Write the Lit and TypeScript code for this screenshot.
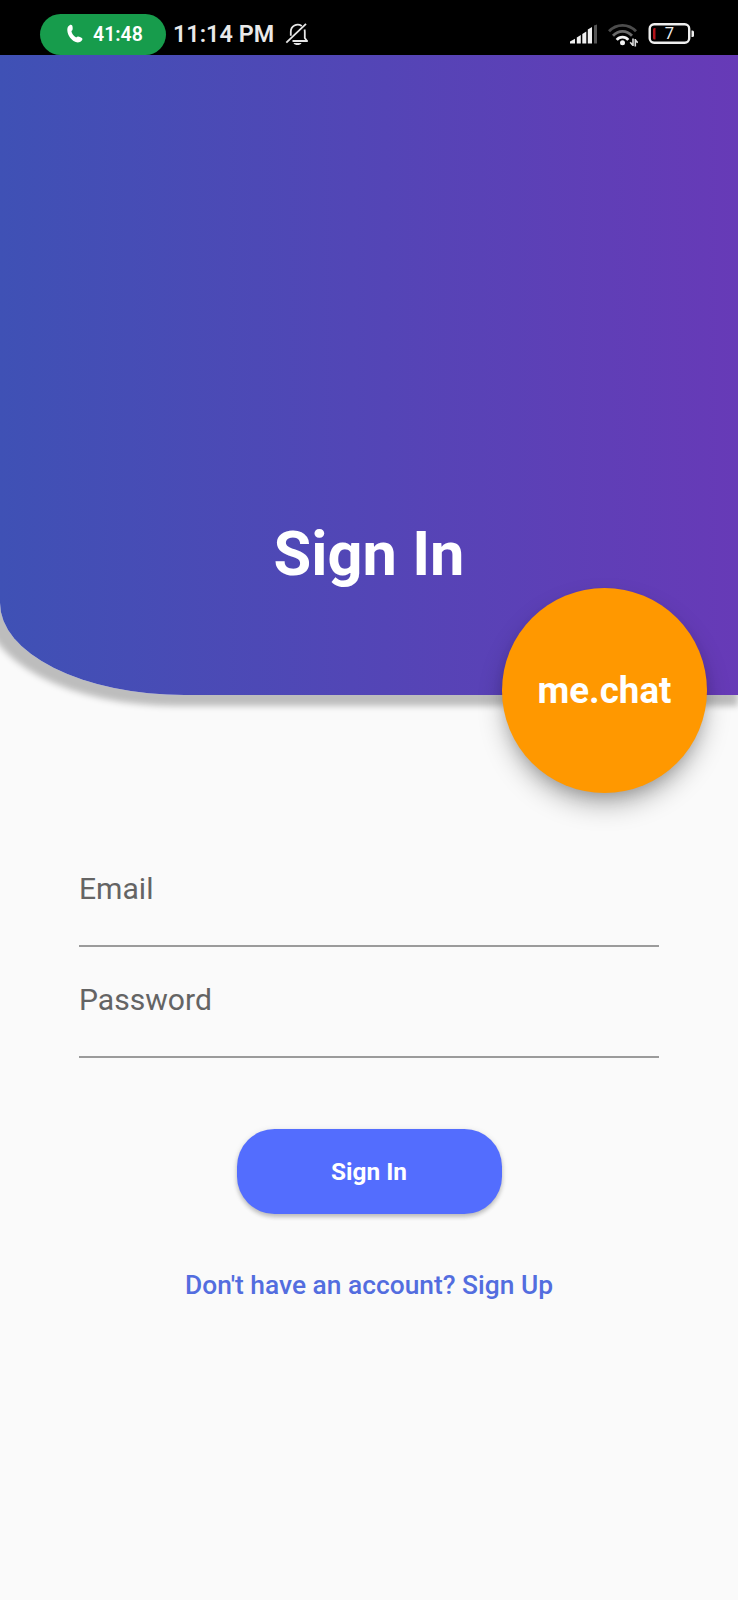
import { LitElement, html, css } from "lit";
import { customElement } from "lit/decorators.js";

@customElement("status-bar")
class StatusBar extends LitElement {
  static styles = css`
    :host { position: relative; z-index: 1; display: flex; box-sizing: border-box; height: 55px; background: #000; color: #e9e9e9; padding: 13.5px 43px 0 40px; justify-content: space-between; align-items: flex-start; overflow: hidden; }
    .side { display: flex; align-items: center; height: 41px; }
    .call { display: flex; align-items: center; box-sizing: border-box; width: 126px; height: 41px; border-radius: 20.5px; background: #179c4c; color: #fff; padding-left: 26px; gap: 9px; font-size: 19.5px; font-weight: 600; }
    .time { font-size: 23.4px; font-weight: 600; margin-left: 7px; white-space: nowrap; }
    .bell { margin-left: 11px; }
    .wifi { margin-left: 10px; }
    .battery { margin-left: 10px; }
    svg { display: block; flex: none; }
  `;
  render() {
    return html`
      <div class="side">
        <div class="call">
          <svg width="18" height="20" viewBox="0 0 18 20"><path fill="#fff" d="M3.600 1.200 C5 .3 6.400 .8 6.600 3 C6.900 5.400 6.600 6.300 5.400 7 C5.800 9.600 7.700 12 10.200 13.400 C11.300 12.300 12.400 12.300 14.500 13.200 C16.800 14.100 17 15.200 15.600 16.800 C13.700 18.900 10.500 18.900 7.500 17 C3.600 14.200 1.200 9.700 1.300 5.500 C1.400 3.300 2.200 2 3.600 1.200 Z"/></svg>
          <span>41:48</span>
        </div>
        <div class="time">11:14 PM</div>
        <svg class="bell" width="24" height="24" viewBox="0 0 24 24" fill="none" stroke="#e6e6e6" stroke-width="1.800">
          <path d="M7.500 19 H22.800 M21.800 18.800 L19.800 16 V9.800 C19.800 9 19.700 8.300 19.500 7.600 M16.800 3.900 C11.800 .8 5.800 4 5.800 9.800 V13.800"/>
          <path d="M1.300 20.600 L21 1.800"/>
          <path d="M8.500 21 H16.500 C15.500 23.700 9.500 23.700 8.500 21 Z" fill="#e6e6e6" stroke="none"/>
        </svg>
      </div>
      <div class="side">
        <svg width="28" height="22" viewBox="0 0 28 22" fill="#f0f0f0">
          <path d="M0 18.500 L5 15.800 V20.500 H0 Z M6.800 14.500 L10.800 12 V20.500 H6.800 Z M12.300 11 L16.300 8.500 V20.500 H12.300 Z M17.800 6.500 L22 4 V20.500 H17.800 Z"/>
          <path fill="#555" d="M24 2.500 L27 1.500 V20.500 H24 Z"/>
        </svg>
        <svg class="wifi" width="30" height="25" viewBox="0 0 30 25" fill="none" stroke-width="2.800">
          <path stroke="#4c4c4c" d="M1 9.300 C8.500 1.300 20.500 1.300 28 9.300"/>
          <path stroke="#6a6a6a" d="M5 13.700 C10.500 8 18.500 8 24 13.700"/>
          <path stroke="#f4f4f4" d="M8.700 17.900 C12 14.100 17 14.100 20.300 17.900"/>
          <circle cx="14.500" cy="20.800" r="2.500" fill="#f4f4f4"/>
          <path stroke="#ddd" stroke-width="1.600" d="M25 16.500 V24 M22.200 20.200 L25 23.500 M27.300 24.500 V17 M27.300 18 L29.800 20.800"/>
        </svg>
        <svg class="battery" width="47" height="24" viewBox="0 0 47 24">
          <rect x="1.700" y="2.200" width="39.500" height="18.600" rx="4.500" fill="none" stroke="#eee" stroke-width="2.400"/>
          <path d="M7.500 6 V17.500 H6.500 Q5 17.500 5 16 V7.500 Q5 6 6.500 6 Z" fill="#b3141a"/>
          <path d="M43.500 8.400 H44.500 Q46 8.400 46 10 V13.400 Q46 15 44.500 15 H43.500 Z" fill="#eee"/>
          <text x="21.300" y="17.400" text-anchor="middle" font-size="16.500" fill="#eee">7</text>
        </svg>
      </div>
    `;
  }
}

@customElement("sign-in-field")
class SignInField extends LitElement {
  static properties = { label: { type: String } };
  static styles = css`
    :host { display: block; box-sizing: border-box; height: 111px; padding-top: 35px; border-bottom: 2px solid #9b9b9b; font-size: 30.1px; line-height: 35px; color: #646464; }
  `;
  declare label: string;
  render() {
    return html`<label>${this.label}</label>`;
  }
}

@customElement("app-root")
class AppRoot extends LitElement {
  static styles = css`
    :host { display: block; height: 1600px; overflow: hidden; background: #fafafa; font-family: Roboto, "Noto Sans", sans-serif; }
    .hero { position: relative; display: flex; justify-content: center; align-items: flex-end; box-sizing: border-box; height: 640px; padding-bottom: 105px; border-bottom-left-radius: 184.5px 92px; background: linear-gradient(90deg, #3f51b5, #673ab7); box-shadow: -8px 3px 6px 8px #bdbdbd; }
    .title { margin: 0; font-size: 61.3px; line-height: 72px; font-weight: 700; color: #fff; }
    .logo { position: absolute; right: 31px; bottom: -98px; width: 205px; height: 205px; border-radius: 50%; background: #ff9800; color: #fff; display: flex; align-items: center; justify-content: center; font-size: 36.7px; font-weight: 700; box-shadow: 0 14px 26px -2px rgba(0,0,0,.28), 0 8px 16px -6px rgba(0,0,0,.2); }
    .form { padding: 141px 79px 0; display: flex; flex-direction: column; align-items: stretch; }
    .submit { align-self: center; width: 265px; height: 85px; margin-top: 71px; padding: 0; border: 0; border-radius: 37.6px; background: #536dfe; color: #fff; font: 700 24.4px Roboto, sans-serif; box-shadow: 0 3px 4px rgba(0,0,0,.2), 0 1px 6px rgba(0,0,0,.1); }
    .signup { align-self: center; margin-top: 55px; font-size: 26.35px; line-height: 32px; font-weight: 500; color: #536ddf; white-space: nowrap; }
  `;
  render() {
    return html`
      <status-bar></status-bar>
      <header class="hero">
        <h1 class="title">Sign In</h1>
        <div class="logo">me.chat</div>
      </header>
      <main class="form">
        <sign-in-field label="Email"></sign-in-field>
        <sign-in-field label="Password"></sign-in-field>
        <button class="submit">Sign In</button>
        <div class="signup">Don't have an account? Sign Up</div>
      </main>
    `;
  }
}
